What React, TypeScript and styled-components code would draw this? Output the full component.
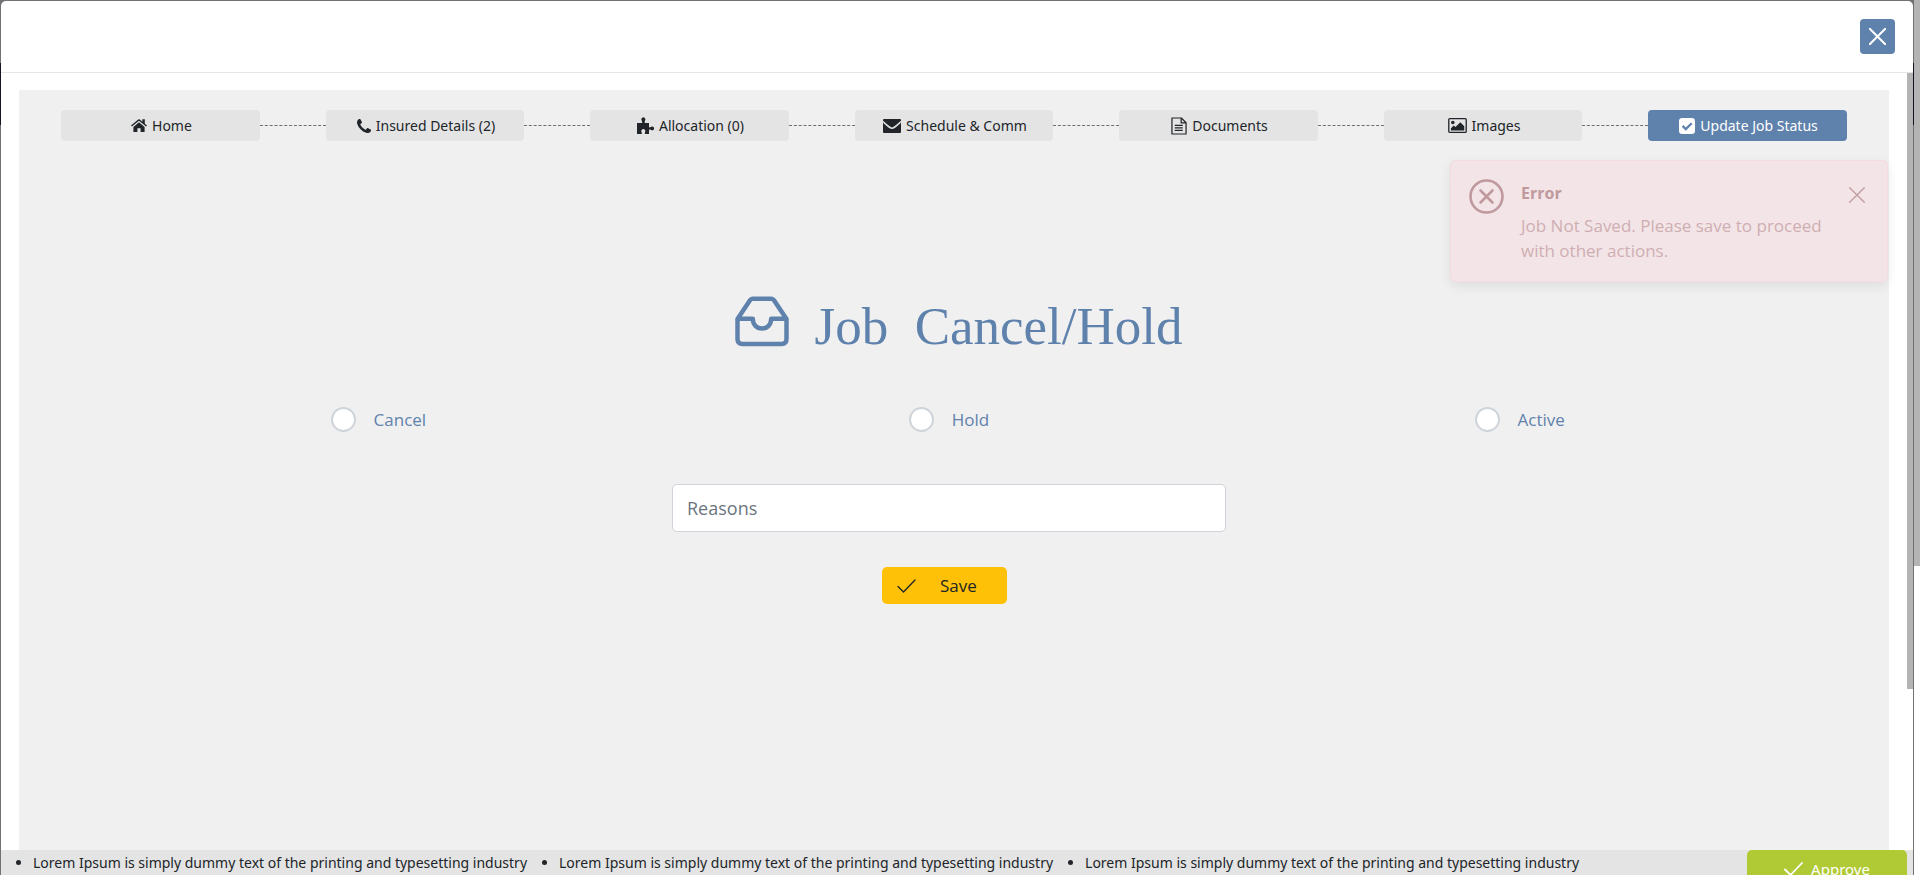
import React from "react";
import styled, { createGlobalStyle, css } from "styled-components";

const blue = "#5f82ad";
const compactFont = '"Noto Sans", "Open Sans", sans-serif';

const GlobalStyle = createGlobalStyle`
  *, *::before, *::after { box-sizing: border-box; }
  body {
    margin: 0;
    font-family: "Open Sans", "Noto Sans", sans-serif;
    font-size: 17px;
    line-height: 24px;
    color: #212529;
    background: #fff;
  }
  button, input { font: inherit; color: inherit; }
`;

const Page = styled.div`
  display: flex;
  height: 100vh;
  overflow: hidden;
`;

const Backdrop = styled.div`
  flex: 1;
  min-width: 0;
  padding: 1px 1px 0 1px;
  background: linear-gradient(#717176 63px, #14141f 63px, #14141f 125px, #717176 125px);
`;

const ScrollTrack = styled.div`
  flex: 0 0 6px;
  background: #fff;
`;

const ScrollThumb = styled.div<{ $size: string }>`
  height: ${(p) => p.$size};
  background: #b4b4b4;
`;

const Modal = styled.div`
  display: flex;
  flex-direction: column;
  height: 100%;
  background: #fff;
  border-radius: 5px 5px 0 0;
`;

const ModalHeader = styled.header`
  display: flex;
  justify-content: flex-end;
  align-items: center;
  flex: 0 0 72px;
  padding: 0 18px;
  border-bottom: 1px solid #e5e5e5;
`;

const CloseButton = styled.button`
  display: grid;
  place-items: center;
  width: 35px;
  height: 35px;
  padding: 0;
  border: 0;
  border-radius: 4px;
  color: #fff;
  background: ${blue};
`;

const ModalBody = styled.div`
  display: flex;
  flex: 1;
  min-height: 0;
`;

const Panel = styled.main`
  position: relative;
  flex: 1;
  min-width: 0;
  margin: 17px 18px 0;
  padding: 20px 42px 0;
  background: #f0f0f0;
`;

const Steps = styled.nav`
  display: flex;
  align-items: center;
`;

const StepButton = styled.button<{ $active?: boolean }>`
  display: flex;
  flex: 3 1 0;
  min-width: 0;
  height: 31px;
  align-items: center;
  justify-content: center;
  gap: 5px;
  padding: 0 0 0 2px;
  border: 0;
  border-radius: 4px;
  font-family: ${compactFont};
  font-size: 14px;
  white-space: nowrap;
  background: #e4e4e4;
  ${(p) =>
    p.$active &&
    css`
      color: #fff;
      background: ${blue};
    `}
`;

const Connector = styled.span`
  flex: 1 1 0;
  border-top: 1px dashed #6f6f6f;
`;

const Toast = styled.div`
  position: absolute;
  top: 70px;
  right: 1px;
  display: flex;
  align-items: flex-start;
  gap: 17px;
  width: 438px;
  padding: 18px 22px 18px 18px;
  border: 1px solid #f3dde0;
  border-radius: 5px;
  color: #cfaeb2;
  background: #f3e5e7;
  box-shadow: 0 4px 12px rgba(0, 0, 0, 0.08);
`;

const ToastText = styled.div`
  flex: 1;
  min-width: 0;
`;

const ToastTitle = styled.h2`
  margin: 0 0 6px;
  font-size: 16px;
  line-height: 28px;
  font-weight: 700;
  color: #bf999d;
`;

const ToastMessage = styled.p`
  margin: 0;
  line-height: 25px;
`;

const ToastClose = styled.button`
  margin: 8px 0 0;
  padding: 0;
  border: 0;
  line-height: 0;
  color: #c49fa3;
  background: none;
`;

const ToastIcon = styled.span`
  line-height: 0;
  color: #bf999d;
`;

const Title = styled.h1`
  display: flex;
  align-items: flex-start;
  justify-content: center;
  gap: 26px;
  margin: 153px 0 0;
  padding-left: 9px;
  font-family: "Liberation Serif", serif;
  font-size: 53px;
  line-height: 64px;
  font-weight: 400;
  white-space: pre;
  color: ${blue};
`;

const Form = styled.form`
  padding: 0 42px 0 32px;
`;

const Choices = styled.div`
  display: grid;
  grid-template-columns: repeat(3, 1fr);
  margin-top: 49px;
`;

const Choice = styled.label`
  display: flex;
  align-items: center;
  justify-content: center;
  gap: 18px;
  line-height: 25px;
  color: ${blue};
`;

const Radio = styled.input`
  appearance: none;
  width: 25px;
  height: 25px;
  margin: 0;
  border: 2px solid #ced4da;
  border-radius: 50%;
  background: #fff;
  &:checked { border: 7px solid ${blue}; }
`;

const Fields = styled.div`
  display: flex;
  flex-direction: column;
  align-items: center;
  gap: 35px;
  margin-top: 52px;
`;

const ReasonInput = styled.input`
  width: 554px;
  max-width: 100%;
  height: 48px;
  padding: 0 14px;
  border: 1px solid #ced4da;
  border-radius: 5px;
  font-size: 18px;
  background: #fff;
  &::placeholder { color: #6c757d; opacity: 1; }
`;

const SaveButton = styled.button`
  display: flex;
  align-items: center;
  gap: 24px;
  width: 125px;
  height: 37px;
  margin-right: 9px;
  padding: 0 15px;
  border: 0;
  border-radius: 5px;
  background: #ffc107;
`;

const Footer = styled.footer`
  display: flex;
  justify-content: space-between;
  align-items: flex-start;
  flex: 0 0 25px;
  overflow: hidden;
  padding-right: 6px;
  background: #e4e4e4;
`;

const Ticker = styled.ul`
  display: flex;
  gap: 32px;
  margin: 0;
  padding: 0 0 0 32px;
  font-family: ${compactFont};
  font-size: 14px;
  line-height: 26px;
  white-space: nowrap;
`;

const ApproveButton = styled.button`
  display: flex;
  flex: 0 0 160px;
  height: 38px;
  align-items: center;
  justify-content: center;
  gap: 8px;
  padding: 0;
  border: 0;
  border-radius: 5px;
  font-family: ${compactFont};
  font-size: 15px;
  color: #fff;
  background: #b0ca36;
`;

const Cross = ({ size, weight }: { size: number; weight: number }) => (
  <svg width={size} height={size} viewBox="0 0 16 16" fill="none" stroke="currentColor" strokeWidth={weight} strokeLinecap="round" aria-hidden="true">
    <path d="M.7.7l14.6 14.6M15.3.7L.7 15.3" />
  </svg>
);

const Tick = ({ width, weight }: { width: number; weight: number }) => (
  <svg width={width} height={14} viewBox="0 0 19 14" fill="none" stroke="currentColor" strokeWidth={weight} strokeLinecap="round" strokeLinejoin="round" aria-hidden="true">
    <path d="M1 7.5l5.5 5.5L18 1" />
  </svg>
);

const HomeIcon = () => (
  <svg width="16" height="16" viewBox="0 0 16 16" fill="currentColor" aria-hidden="true">
    <path d="M8 4.3l5.6 4.7v4.4a.6.6 0 0 1-.6.6H9.6v-3.7H6.4V14H3a.6.6 0 0 1-.6-.6V9z" />
    <path d="M7.2 1.5a1.2 1.2 0 0 1 1.6 0l2.6 2.2V1.2h2.4v4.5L16 7.6l-.9 1L8 2.8.9 8.6l-.9-1z" />
  </svg>
);

const PhoneIcon = () => (
  <svg width="14" height="14" viewBox="0 128 1408 1408" fill="currentColor" aria-hidden="true">
    <path d="M1408 1240q0 27-10 70.5t-21 68.5q-21 50-122 106-94 51-186 51-27 0-52.5-3.5t-57.5-12.5-47.5-14.5-55.5-20.5-49-18q-98-35-175-83-128-79-264.5-215.5t-215.5-264.5q-48-77-83-175-3-9-18-49t-20.5-55.5-14.5-47.5-12.5-57.5-3.5-52.5q0-92 51-186 56-101 106-122 25-11 68.5-21t70.5-10q14 0 21 3 18 6 53 76 11 19 30 54t35 63.5 31 53.5q3 4 17.5 25t21.5 35.5 7 28.5q0 20-28.5 50t-62 55-62 53-28.5 46q0 9 5 22.5t8.5 20.5 14 24 11.5 19q76 137 174 235t235 174q2 1 19 11.5t24 14 20.5 8.5 22.5 5q18 0 46-28.5t53-62 55-62 50-28.5q14 0 28.5 7t35.5 21.5 25 17.5q25 15 53.5 31t63.5 35 54 30q70 35 76 53 3 7 3 21z" />
  </svg>
);

const PuzzleIcon = () => (
  <svg width="17" height="18" viewBox="0 0 17 18" fill="currentColor" aria-hidden="true">
    <path d="M0 6h4.500c.8 0 .9-.6.6-1.300L4.700 3.500A2 2 0 1 1 8.100 3.300L7.700 4.700c-.2.800 0 1.300.7 1.300H12v3.700c0 .7.500.9 1.200.6l1-.5a1.900 1.900 0 1 1 0 3.200l-1-.5c-.7-.3-1.200 0-1.200.6V17H8.400c-.6 0-.9-.5-.6-1.100l.4-1.200a2 2 0 1 0-3.800 0l.5 1.200c.2.600 0 1.100-.7 1.100H0z" />
  </svg>
);

const EnvelopeIcon = () => (
  <svg width="18" height="14" viewBox="0 0 18 14" aria-hidden="true">
    <rect width="18" height="14" rx="1" fill="currentColor" />
    <path d="M0 2.600c2.500 2.300 6.500 6.600 9 6.600s6.500-4.300 9-6.600" fill="none" stroke="#e4e4e4" strokeWidth="1.400" />
  </svg>
);

const DocumentIcon = () => (
  <svg width="16" height="18" viewBox="0 0 17 19" fill="none" stroke="currentColor" strokeWidth="1.3" strokeLinejoin="round" aria-hidden="true">
    <path d="M1 1h10l5 5v12H1z" />
    <path d="M10.8 1v5.2H16M4 8.9h8.5M4 11.5h8.5M4 14.1h8.5" />
  </svg>
);

const ImageIcon = () => (
  <svg width="19" height="15" viewBox="0 0 20 16" aria-hidden="true">
    <rect x=".7" y=".7" width="18.6" height="14.6" rx="1" fill="none" stroke="currentColor" strokeWidth="1.4" />
    <circle cx="5" cy="4.7" r="1.9" fill="currentColor" />
    <path d="M3 13.3v-2.5L6 8l1.8 1.700L13 4.500l4.200 4.200v4.600z" fill="currentColor" />
  </svg>
);

const CheckBoxIcon = () => (
  <svg width="16" height="16" viewBox="0 0 17 17" aria-hidden="true">
    <rect width="17" height="17" rx="3.5" fill="#fff" />
    <path d="M3.8 8.4l3.4 3.4 6.3-6.3" fill="none" stroke={blue} strokeWidth="2.4" />
  </svg>
);

const InboxIcon = () => (
  <svg width="54" height="64" viewBox="0 0 54 64" fill="none" stroke="currentColor" strokeWidth="4.5" strokeLinejoin="round" aria-hidden="true">
    <path d="M2.500 25L15 6.200q1-1.500 2.500-1.500h19q1.500 0 2.500 1.500L51.500 25v20q0 5-5 5h-39q-5 0-5-5zM2.500 24.700h15.300c0 5.500 3.600 9.800 9.200 9.800s9.200-4.300 9.200-9.800h15.300" />
  </svg>
);

const ErrorIcon = () => (
  <svg width="35" height="35" viewBox="0 0 35 35" fill="none" stroke="currentColor" strokeWidth="2.6" strokeLinecap="round" aria-hidden="true">
    <circle cx="17.5" cy="17.5" r="16" />
    <path d="M11.5 11.5l12 12M23.5 11.5l-12 12" />
  </svg>
);

const steps = [
  { label: "Home", icon: <HomeIcon /> },
  { label: "Insured Details (2)", icon: <PhoneIcon /> },
  { label: "Allocation (0)", icon: <PuzzleIcon /> },
  { label: "Schedule & Comm", icon: <EnvelopeIcon /> },
  { label: "Documents", icon: <DocumentIcon /> },
  { label: "Images", icon: <ImageIcon /> },
  { label: "Update Job Status", icon: <CheckBoxIcon />, active: true },
];

const notices = Array(3).fill("Lorem Ipsum is simply dummy text of the printing and typesetting industry");

export default function App() {
  return (
    <Page>
      <GlobalStyle />
      <Backdrop>
        <Modal>
          <ModalHeader>
            <CloseButton aria-label="Close">
              <Cross size={17} weight={1.9} />
            </CloseButton>
          </ModalHeader>
          <ModalBody>
            <Panel>
              <Steps>
                {steps.map((step, i) => (
                  <React.Fragment key={step.label}>
                    {i > 0 && <Connector />}
                    <StepButton $active={step.active}>
                      {step.icon}
                      {step.label}
                    </StepButton>
                  </React.Fragment>
                ))}
              </Steps>
              <Title>
                <InboxIcon />
                {"Job  Cancel/Hold"}
              </Title>
              <Form onSubmit={(e) => e.preventDefault()}>
                <Choices>
                  {["Cancel", "Hold", "Active"].map((name) => (
                    <Choice key={name}>
                      <Radio type="radio" name="status" value={name} />
                      {name}
                    </Choice>
                  ))}
                </Choices>
                <Fields>
                  <ReasonInput type="text" placeholder="Reasons" aria-label="Reasons" />
                  <SaveButton type="submit">
                    <Tick width={19} weight={1.3} />
                    Save
                  </SaveButton>
                </Fields>
              </Form>
              <Toast role="alert">
                <ToastIcon>
                  <ErrorIcon />
                </ToastIcon>
                <ToastText>
                  <ToastTitle>Error</ToastTitle>
                  <ToastMessage>Job Not Saved. Please save to proceed with other actions.</ToastMessage>
                </ToastText>
                <ToastClose aria-label="Dismiss">
                  <Cross size={16} weight={1.5} />
                </ToastClose>
              </Toast>
            </Panel>
            <ScrollTrack>
              <ScrollThumb $size="79.3%" />
            </ScrollTrack>
          </ModalBody>
          <Footer>
            <Ticker>
              {notices.map((notice, i) => (
                <li key={i}>{notice}</li>
              ))}
            </Ticker>
            <ApproveButton>
              <Tick width={19} weight={1.8} />
              Approve
            </ApproveButton>
          </Footer>
        </Modal>
      </Backdrop>
      <ScrollTrack>
        <ScrollThumb $size="64.7%" />
      </ScrollTrack>
    </Page>
  );
}
